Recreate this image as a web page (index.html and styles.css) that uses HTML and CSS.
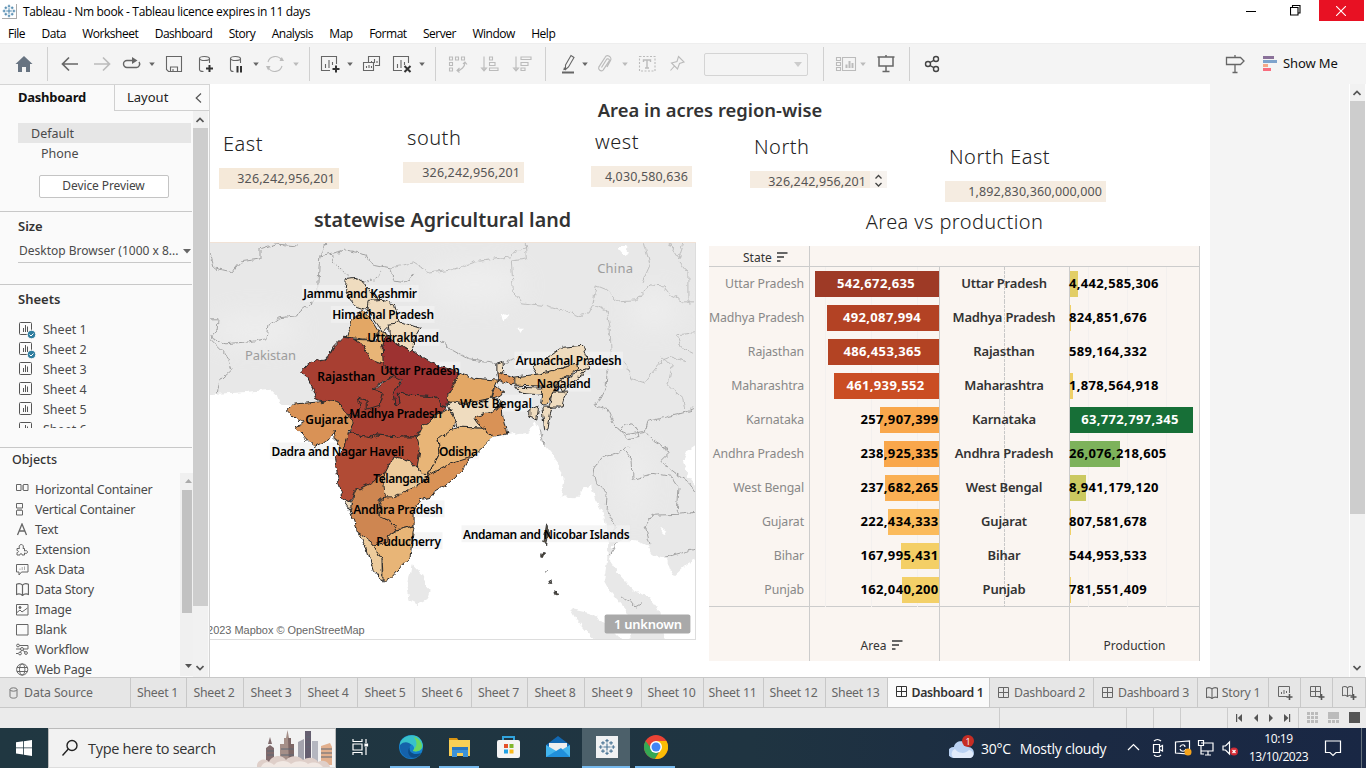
FILE: index.html
```html
<!DOCTYPE html>
<html lang="en">
<head>
<meta charset="utf-8">
<title>Tableau - Nm book</title>
<link rel="stylesheet" href="styles.css">
</head>
<body>
<svg class="defs" width="0" height="0">
  <defs>
    <symbol id="caret" viewBox="0 0 8 24"><path d="M1.2 10.5h5.6L4 14z" fill="currentColor"/></symbol>
    <symbol id="sheet" viewBox="0 0 14 14"><rect x=".5" y=".5" width="12" height="12" rx="1" fill="none" stroke="#555"/><path d="M4.5 6v4M6.5 3v7M8.500 4.500V10" stroke="#555" fill="none"/></symbol>
    <symbol id="dash" viewBox="0 0 12 12"><path d="M.5.5h10v10H.5zM5.500 .5v10M.5 5.500h10" fill="none" stroke="currentColor" stroke-width="1"/></symbol>
    <symbol id="book" viewBox="0 0 12 12"><path d="M.5 1.2C2 .5 4.500.5 6 2 7.500.5 10 .5 11.500 1.200V10.500C10 10 7.500 10 6 11.500 4.500 10 2 10 .5 10.500zM6 2v9" fill="none" stroke="currentColor" stroke-width="1.1"/></symbol>
    <symbol id="sort" viewBox="0 0 11 11"><path d="M0 1h10.500M0 5h7M0 9h3.500" stroke="#666" stroke-width="2"/></symbol>
    <symbol id="logo" viewBox="0 0 20 20"><path d="M10 6v8M6 10h8M10 1v4M8.200 3h3.600M10 15v4M8.200 17h3.600M3 8v4M1 10h4M17 8v4M15 10h4M5.500 3.500v4M3.500 5.500h4M14.500 3.500v4M12.500 5.500h4M5.500 12.500v4M3.500 14.500h4M14.500 12.500v4M12.500 14.500h4" stroke="currentColor" stroke-width="1.300" fill="none"/></symbol>
  </defs>
</svg>

<header class="titlebar">
  <svg class="app-icon"><use href="#logo"/></svg>
  <span class="app-title">Tableau - Nm book - Tableau licence expires in 11 days</span>
  <span class="win-btn"><svg width="10" height="10"><path d="M0 5.500h10" stroke="#000"/></svg></span>
  <span class="win-btn"><svg width="11" height="11" fill="none" stroke="#000" stroke-width="1.100"><path d="M.5 2.500h7.500v7.500H.5zM2.500 2.500v-2h7.500v7.500H8"/></svg></span>
  <span class="win-btn close"><svg width="10" height="10" stroke="#fff" stroke-width="1.100"><path d="M0 0l10 10M10 0L0 10"/></svg></span>
</header>
<nav class="menubar"><span>File</span><span>Data</span><span>Worksheet</span><span>Dashboard</span><span>Story</span><span>Analysis</span><span>Map</span><span>Format</span><span>Server</span><span>Window</span><span>Help</span></nav>

<div class="toolbar">
  <svg class="ic"><path d="M3.500 12L12 4l8.500 8H18v8h-4v-5h-4v5H6v-8z" fill="#677381"/></svg>
  <i class="sep"></i>
  <svg class="ic"><path d="M20 12H5M11 5.500L4.500 12l6.500 6.500" stroke-width="1.700"/></svg>
  <svg class="ic off"><path d="M4 12h15M13 5.500l6.500 6.500-6.500 6.500" stroke-width="1.700"/></svg>
  <svg class="ic"><path d="M13 8.500H8a3.500 3.500 0 0 0 0 7h9.500a3.500 3.500 0 0 0 2.500-5.500" stroke-width="1.400"/><path d="M13 5l5.500 3.500L13 12z" fill="#666" stroke="none"/></svg>
  <svg class="ct"><use href="#caret"/></svg>
  <svg class="ic"><path d="M4.500 4.500h15v15h-13l-2-2zM8.500 19v-4h7v4M11 19v-2"/></svg>
  <svg class="ic"><ellipse cx="11.500" cy="6.500" rx="5" ry="2"/><path d="M6.500 6.500v11c0 1.200 2 2 4 2M16.500 6.500V11"/><path d="M16.500 13v7M13 16.500h7" stroke="#333" stroke-width="2"/></svg>
  <svg class="ic"><ellipse cx="11.500" cy="6.500" rx="5" ry="2"/><path d="M6.500 6.500v11c0 1.200 1.500 2 3 2M16.500 6.500V11"/><path d="M13.500 14v6.500M17 14v6.500" stroke="#333" stroke-width="2"/></svg>
  <svg class="ct"><use href="#caret"/></svg>
  <svg class="ic off"><path d="M5 10a7.500 7.500 0 0 1 13.500-2M19 14A7.500 7.500 0 0 1 5.500 16"/><path d="M16.500 9h4.500l-2.200-4zM3 14h4.500l-2.300 4.500z" fill="#bbb" stroke="none"/></svg>
  <svg class="ct off"><use href="#caret"/></svg>
  <i class="sep"></i>
  <svg class="ic"><path d="M12 18.500H3.500v-14h15V12M7.500 12v4M11 8v8M14.500 10v3"/><path d="M18 13.500v7M14.500 17h7" stroke="#333" stroke-width="2"/></svg>
  <svg class="ct"><use href="#caret"/></svg>
  <svg class="ic"><path d="M9.500 10V4.500h11v9H16M4.500 10.500h10v8h-10zM12.500 9v2M15.500 7v4M18 9v2M7.500 14v2M10 13v3M12.500 14v2"/></svg>
  <svg class="ic"><path d="M12 18.500H3.500v-14h15V11M7.500 12v4M11 8v8M14.500 10v3"/><path d="M14.500 14l6 6M20.500 14l-6 6" stroke="#333" stroke-width="2"/></svg>
  <svg class="ct"><use href="#caret"/></svg>
  <i class="sep"></i>
  <svg class="ic off"><path d="M4.500 5h3v3h-3zM10.500 5h3v3h-3zM16.500 5h3v3h-3zM4.500 10.500h3v3h-3zM4.500 16h3v3h-3zM20 10.500c0 4-4 8-7.500 8M18 12l2-2 2 2.500M14.500 16l-2.500 2.500 2.500 2"/></svg>
  <svg class="ic off"><path d="M6 4.500V19M3.500 16l2.500 3 2.500-3zM11.500 5h3v3h-3zM11.500 10.500h5.500v3h-5.500zM11.500 16h8.500v2.500h-8.500z"/></svg>
  <svg class="ic off"><path d="M6 4.500V19M3.500 16l2.500 3 2.500-3zM11 5h10v2.500H11zM11 10.500h7v3h-7zM11 16h4v2.500h-4z"/></svg>
  <i class="sep"></i>
  <svg class="ic"><path d="M9.500 13l5.500-9.500 3 2-5.500 9.500-3 2.500zM8.500 15.500l-.5 2 2-.5"/><path d="M6 20.500h12" stroke-width="2"/></svg>
  <svg class="ct"><use href="#caret"/></svg>
  <svg class="ic off"><path d="M8.500 15.500l5-8a1.500 1.500 0 0 1 2.600 1.600l-6 9a2.700 2.700 0 0 1-4.300-3L12 5.500a3 3 0 0 1 5.500 3L14 15" stroke-width="1.200"/></svg>
  <svg class="ct off"><use href="#caret"/></svg>
  <svg class="ic off"><rect x="4.500" y="4.500" width="15.500" height="14.500" stroke-dasharray="2 1.500"/><path d="M8.500 10V8h7v2M12 8v8M10 16h4" stroke-width="1.400"/></svg>
  <svg class="ic off"><path d="M13.500 4.500l5.500 5.500-4.500 1.500-2 5.500-6-6 5.500-1.500zM9.500 14L5.500 18.500"/></svg>
  <div class="fit-select"><svg width="8" height="5"><path d="M0 0h8L4 5z" fill="#ccc"/></svg></div>
  <i class="sep"></i>
  <svg class="ic off wide"><path d="M2.500 5.500h4v3h-4zM2.500 10.500h4v3h-4zM2.500 15.500h4v3h-4zM8.500 5.500h13v13h-13z"/><path d="M12.500 16v-3.500M15.500 16V9M18.500 16v-5" stroke-width="2"/></svg>
  <svg class="ct off"><use href="#caret"/></svg>
  <svg class="ic"><path d="M3.500 5h17M5 5.500v8.500h14V5.500M12 3v2M12 14v5M8.500 19.500h7" stroke-width="1.500"/></svg>
  <i class="sep"></i>
  <svg class="ic dark"><circle cx="8" cy="12" r="2.500"/><circle cx="16" cy="7" r="2.500"/><circle cx="16" cy="17" r="2.500"/><path d="M10 10.500l3.800-2.200M10 13.500l3.800 2.200"/></svg>
  <svg class="ic"><path d="M3.500 5.500h14l3.500 3.500-3.500 3.500h-14zM12 3v2.500M12 12.500v8M9.500 20.500h5" stroke-width="1.300"/></svg>
  <div class="showme"><svg width="14" height="15"><path d="M0 0h11v3H0z" fill="#8a7199"/><path d="M0 4h14v3H0z" fill="#7ea3cc"/><path d="M0 8h5v3H0z" fill="#f5a887"/><path d="M0 12h8v3H0z" fill="#f96d7e"/></svg>Show Me</div>
</div>

<main class="workspace">
  <aside class="sidebar">
    <div class="side-tabs"><b>Dashboard</b><span>Layout<svg width="7" height="10"><path d="M6 .5L1.200 5 6 9.500" fill="none" stroke="#555" stroke-width="1.200"/></svg></span></div>
    <div class="side-body">
      <div class="side-main">
        <section class="devices">
          <div class="dev active">Default</div>
          <div class="dev phone">Phone</div>
          <button class="preview">Device Preview</button>
        </section>
        <section class="size"><h3>Size</h3><div class="size-pick">Desktop Browser (1000 x 8...<svg width="8" height="5"><path d="M0 0h8L4 4.500z" fill="#666"/></svg></div></section>
        <section class="sheets"><h3>Sheets</h3>
          <ul>
            <li><svg class="used"><use href="#sheet" width="14" height="14"/><circle cx="12.500" cy="12.500" r="4.300" fill="#2f7d9f" stroke="#fafafa"/><path d="M10.500 12.500l1.500 1.500 2.500-2.500" stroke="#fff" fill="none"/></svg>Sheet 1</li>
            <li><svg class="used"><use href="#sheet" width="14" height="14"/><circle cx="12.500" cy="12.500" r="4.300" fill="#2f7d9f" stroke="#fafafa"/><path d="M10.500 12.500l1.500 1.500 2.500-2.500" stroke="#fff" fill="none"/></svg>Sheet 2</li>
            <li><svg><use href="#sheet" width="14" height="14"/></svg>Sheet 3</li>
            <li><svg><use href="#sheet" width="14" height="14"/></svg>Sheet 4</li>
            <li><svg><use href="#sheet" width="14" height="14"/></svg>Sheet 5</li>
            <li><svg><use href="#sheet" width="14" height="14"/></svg>Sheet 6</li>
          </ul>
        </section>
        <section class="objects"><h3>Objects</h3>
          <div class="obj-wrap">
            <ul>
              <li><svg><path d="M.5 1.500h4.500v6H.5zM7.500 1.500H12v6H7.500z"/><path d="M5 2h2.500v5H5z" fill="#aaa" stroke="none"/></svg>Horizontal Container</li>
              <li><svg><path d="M.5.5h6v4.500h-6zM.5 7.500h6V12h-6z"/><path d="M1 5h5v2.500H1z" fill="#aaa" stroke="none"/></svg>Vertical Container</li>
              <li><svg><path d="M1.500 12L6 1l4.500 11M3 8h6" stroke-width="1.300"/></svg>Text</li>
              <li><svg><path d="M1 5.500h2.500c-1-2 0-4 1.800-4S8 3.500 7 5.500h1.500V8c2-1 3 0 3 1s-1 2-3 1v2H6c0-1.500-1-1.500-1-1.500S4 10.500 4 12H1V9.500c2 0 2-2 0-2z"/></svg>Extension</li>
              <li><svg><path d="M.5 1.500H12v7.500H5.500L3 12V9H.5z"/><path d="M4 7V5.500M6.200 7V4M8.500 7V3.500" stroke="#aaa"/></svg>Ask Data</li>
              <li><svg><use href="#book" width="13" height="13"/></svg>Data Story</li>
              <li><svg><path d="M.5 1.500h11.500V12H.5zM1 9.500l3-2.500 2 2 5.500-4"/><circle cx="4" cy="4.500" r="1" fill="#666"/></svg>Image</li>
              <li><svg><path d="M.5 1.500h11.500V12H.5z"/></svg>Blank</li>
              <li><svg><circle cx="2" cy="2.500" r="1.400"/><circle cx="6" cy="6" r="1.500"/><circle cx="4" cy="10.500" r="1.400"/><circle cx="10" cy="10" r="1.400"/><path d="M3.500 2.500H12V6H7.500M0 6h4.500M7 7.500l2 1.500M5.500 7.500L4.500 9M0 10.500h2"/></svg>Workflow</li>
              <li><svg><circle cx="6.200" cy="6.500" r="5.600"/><ellipse cx="6.200" cy="6.500" rx="2.700" ry="5.600"/><path d="M1 4.500h10.500M1 8.500h10.500"/></svg>Web Page</li>
            </ul>
            <div class="mini-bar"><svg width="8" height="4"><path d="M0 4h7L3.500 0z" fill="#aaa"/></svg><i></i><svg width="8" height="4"><path d="M0 0h7L3.500 4z" fill="#555"/></svg></div>
          </div>
        </section>
      </div>
      <div class="vbar side"><svg width="8" height="6"><path d="M.5 5L4 1.500 7.500 5" /></svg><i></i><svg width="8" height="6"><path d="M.5 1L4 4.500 7.500 1"/></svg></div>
    </div>
  </aside>

  <div class="canvas">
    <h1>Area in acres region-wise</h1>
    <div class="kpis">
      <div class="kpi east"><h2>East</h2><p>326,242,956,201</p></div>
      <div class="kpi south"><h2>south</h2><p>326,242,956,201</p></div>
      <div class="kpi west"><h2>west</h2><p>4,030,580,636</p></div>
      <div class="kpi north"><h2>North</h2><div class="spin-row"><p>326,242,956,201</p><svg width="17" height="17"><rect width="17" height="17" fill="#f7f3ef"/><path d="M5.500 7.500l3-3 3 3M5.500 12l3 3 3-3" fill="none" stroke="#444" stroke-width="1.300"/></svg></div></div>
      <div class="kpi neast"><h2>North East</h2><p>1,892,830,360,000,000</p></div>
    </div>
    <div class="views">
      <section class="mapview">
        <h2>statewise Agricultural land</h2>
        <svg class="map" viewBox="210 243 486 397">
          <defs>
            <filter id="coast" x="-5%" y="-5%" width="110%" height="110%" color-interpolation-filters="sRGB"><feTurbulence type="fractalNoise" baseFrequency=".16" numOctaves="2" seed="4"/><feDisplacementMap in="SourceGraphic" scale="6" xChannelSelector="R" yChannelSelector="G"/></filter>
            <filter id="soft"><feGaussianBlur stdDeviation="14"/></filter>
          </defs>
          <rect x="210" y="243" width="486" height="397" fill="#fff"/>
          <g filter="url(#coast)">
            <path fill="#e8e8e8" d="M200 233H706V440L688 452 684 462 690 477 706 496V555L690 563 675 577 671 570 668 560 655 557 648 546 637 541 625 540 613 546 611 562 620 575 634 591 650 598 660 612 668 650H633L628 612 612 593 605 580 608 562 609 545 605 515 596 500 592 486 586 488 576 499 562 498 565 482 556 458 546 446 541 431 535 422 529 432 505 436 470 440 400 440 330 420 300 408 280 404 277 396 271 390 240 393 200 395Z"/>
            <path fill="#e8e8e8" d="M571 610L590 614 607 625 622 640 632 650H606L590 635 576 619ZM412 565L422 575 430 592 427 601 418 606 410 602 408 588Z"/>
            <path fill="#fff" d="M618 247h8l4 5-5 3zM502 313l7 3-4 5zM518 328h8l-6 4zM661 528l7 5-3 2z"/>
          </g>
          <g fill="#fff" opacity=".28" filter="url(#soft)"><ellipse cx="255" cy="330" rx="45" ry="16"/><ellipse cx="475" cy="285" rx="50" ry="20"/><ellipse cx="655" cy="310" rx="26" ry="18"/><ellipse cx="635" cy="480" rx="12" ry="40"/></g>
          <g filter="url(#coast)" fill="none" stroke="#a2a2a2" stroke-width="1">
            <path d="M210 253L214 268 232 272 240 262 260 259 260 249 275 244 298 246M326 243L320 256 318 285 318 298 300 312 298 316 279 318 268 326 266 339 250 342 225 344 213 339 210 334M210 339L225 354 231 370 220 380 217 394M210 319h8l-1 12-7 8M320 256L346 250 366 254 372 264 391 268M391 268l3 13 12 2 8-10"/>
            <path stroke="#b4b4b4" stroke-width=".8" d="M391 268L414 263 430 273 452 270 475 262 510 257 528 246"/>
            <path stroke-dasharray="2 1.500" d="M333 255l1 10 13 9 8 8 20-2 8-10"/>
            <path stroke="#b4b4b4" stroke-width=".8" d="M512 261l2 30 8 12 26 3 22 6 10 4 10-3 4-8 14 6 3 17 1 25-4 20M594 303l3-17 10 4 12 12 18-1 13-16 15 1 8 10 11 6h10M512 261l16-2-1-16M643 283l8-18-6-22M670 243l10 15 5-15M681 262l8 10v33M696 333l-18 2 4 12 12 6M625 362l8 17 12 4 18-22 10-4 14 5M663 357l10 10-4 18 15 14 2 14 10-6"/>
            <path d="M441 341L452 350 470 360 497 364M504 365l10-6 10-4M608 370l-1 18-11 18 12 4 8 17 12 8 17-3 3-10 30-7 18-5"/>
            <path d="M630 440l-10-10 8-6 10 4 2 10zM630 447l-15 8-12 3-9 12 2 12 12 12-1 15 8 16 0 9M618 543l-9 14M625 450l8 10 1 20 20-6 18 3 8 12-2 26-25 1-7 10 5 19M646 432l9 10 17 10-10 10 15 12 12 8 7 10M679 515l17-2M667 558l10-3 19-5M622 598l8 3 6 7 7-4"/>
            <path d="M541 430l4 17"/>
          </g>
          <g class="halo"><rect x="302" y="285" width="117" height="17"/><rect x="331" y="306" width="104" height="17"/><rect x="366" y="329" width="74" height="17"/><rect x="379" y="362" width="82" height="17"/><rect x="515" y="352" width="109" height="17"/><rect x="536" y="375" width="56" height="17"/><rect x="460" y="395" width="73" height="17"/><rect x="270" y="443" width="136" height="17"/><rect x="437" y="443" width="43" height="17"/><rect x="352" y="501" width="93" height="17"/><rect x="375" y="533" width="68" height="17"/><rect x="462" y="526" width="169" height="17"/></g>
          <g filter="url(#coast)" stroke="#292929" stroke-width="1" stroke-linejoin="round" transform="translate(.5 .5)">
            <path fill="#efdcbf" d="M346 278L355 277 364 282 369 290 378 299 368 305 362 309 356 307 352 302 347 295 345 287Z"/>
            <path fill="#efdcbf" d="M368 300L383 299 393 303 398 323 388 327 383 332 373 318 367 308Z"/>
            <path fill="#efdcbf" d="M388 324L402 322 420 328 414 338 412 352 400 345 390 340Z"/>
            <path fill="#e3a765" d="M347 337L352 320 363 309 370 318 378 331 373 340 357 338Z"/>
            <path fill="#e8b577" d="M353 339L377 340 378 330 386 333 382 347 385 363 377 362 369 358 363 345Z"/>
            <path fill="#a83f32" d="M352 423L340 405 373 390 393 375 402 378 393 393 395 405 400 403 398 393 410 395 427 396 438 398 440 405 447 408 432 418 422 427 417 437 397 437 377 435 370 438 350 433Z"/>
            <path fill="#a83f32" d="M343 337L353 338 363 345 370 358 383 363 393 375 377 385 373 390 383 393 380 405 367 409 367 400 357 398 360 408 357 415 347 413 338 403 317 400 312 387 307 377 301 372 310 362 327 358 333 347Z"/>
            <path fill="#9d3231" d="M385 335L392 340 413 352 430 362 458 373 457 383 448 393 447 407 440 405 438 398 427 396 410 395 398 393 400 403 395 405 393 393 402 380 392 375 383 363 382 347Z"/>
            <path fill="#d99256" d="M287 411L293 404 317 402 327 400 338 403 347 413 353 423 348 433 348 443 342 451 335 440 334 430 328 440 315 446 307 440 295 427 305 423 297 420Z"/>
            <path fill="#b14b35" d="M334 457L345 447 348 434 352 433 370 438 377 435 397 437 417 437 420 450 417 467 410 462 393 457 388 468 383 477 373 482 353 492 350 502 343 500 338 480Z"/>
            <path fill="#efdcbf" d="M343 500L351 502 351 511Z"/>
            <path fill="#ce8651" d="M353 492L373 482 384 472 387 497 380 500 380 517 392 522 397 530 387 537 387 543 373 545 357 532 350 511Z"/>
            <path fill="#edcb9c" d="M357 532L373 545 382 560 382 582 373 570 367 550Z"/>
            <path fill="#e8b577" d="M387 537L397 530 414 526 412 540 410 558 400 568 392 577 383 583 382 560 373 545 387 543Z"/>
            <path fill="#d99256" d="M381 498L403 493 423 483 428 475 447 465 471 456 460 473 450 483 435 492 432 497 420 500 414 510 414 526 397 530 392 522 380 517Z"/>
            <path fill="#edcb9c" d="M393 457L410 462 417 468 427 477 423 483 392 498 385 498 383 477Z"/>
            <path fill="#e8b577" d="M432 418L450 408 455 422 450 433 438 440 440 453 432 467 427 477 417 467 420 450 417 437 422 427Z"/>
            <path fill="#e8b577" d="M438 440L450 430 460 427 483 428 493 436 483 447 472 457 447 465 428 475 440 453Z"/>
            <path fill="#efdcbf" d="M447 403L467 403 492 398 502 400 497 410 477 417 482 428 457 427 453 413Z"/>
            <path fill="#e3a765" d="M447 397L457 377 460 373 473 378 498 380 493 392 492 398 467 403 448 403Z"/>
            <path fill="#d99256" d="M474 417L497 410 502 403 503 417 507 434 493 436 482 428ZM497 372L515 377 513 385 498 380ZM496 386L505 393 492 398Z"/>
            <path fill="#efdcbf" d="M497 363L503 361 504 373 497 372ZM533 367L563 347 583 345 587 357 590 368 577 372 577 363 563 368 538 375Z"/>
            <path fill="#e8bd84" d="M515 377L538 374 563 368 577 363 578 369 558 382 553 395 545 406 541 403 543 386 515 385Z"/>
            <path fill="#efdcbf" d="M515 387L543 388 542 395 520 393ZM558 382L577 372 590 368 567 387 563 392ZM553 392L567 392 563 407 549 407ZM542 407L552 407 548 430 545 430ZM530 410L539 406 537 420 530 417Z"/>
            <path fill="#5c5548" stroke-width=".8" d="M547 524l2 8-2 14-3-4zM542 554h1.500v3.500h-1.500zM545 571h.5v.5h-.5zM550 581l3 2-2 1zM555 591l3 4-2 1z"/>
          </g>
          <g class="country"><text x="245" y="360" textLength="51">Pakistan</text><text x="598" y="273" textLength="36">China</text></g>
          <g class="state" transform="translate(.5 .6)">
            <text x="303" y="298" textLength="114">Jammu and Kashmir</text><text x="332" y="319" textLength="102">Himachal Pradesh</text><text x="367" y="342" textLength="72">Uttarakhand</text>
            <text x="380" y="375" textLength="80">Uttar Pradesh</text><text x="317" y="381" textLength="58">Rajasthan</text><text x="516" y="365" textLength="106">Arunachal Pradesh</text>
            <text x="537" y="388" textLength="54">Nagaland</text><text x="460" y="408" textLength="72">West Bengal</text><text x="349" y="418" textLength="93">Madhya Pradesh</text>
            <text x="305" y="424" textLength="43">Gujarat</text><text x="271" y="456" textLength="133">Dadra and Nagar Haveli</text><text x="439" y="456" textLength="39">Odisha</text>
            <text x="373" y="483" textLength="57">Telangana</text><text x="353" y="514" textLength="90">Andhra Pradesh</text><text x="376" y="546" textLength="65">Puducherry</text><text x="463" y="539" textLength="167">Andaman and Nicobar Islands</text>
          </g>
          <rect x="210" y="622" width="157" height="16" fill="#fff" opacity=".7"/>
          <text class="credit" x="207" y="635" textLength="158">2023 Mapbox © OpenStreetMap</text>
          <rect x="605.500" y="615.500" width="86" height="19" rx="2" fill="#a9a9a9"/>
          <text class="unknown" x="615" y="630" textLength="68">1 unknown</text>
        </svg>
      </section>

      <section class="chart">
        <h2>Area vs production</h2>
        <div class="grid">
          <div class="hdr"><span>State <svg width="11" height="11"><use href="#sort"/></svg></span><span></span></div>
          <div class="row"><span>Uttar Pradesh</span><div class="area"><i style="width:124px;background:#9e3a26"></i><b class="in" style="width:124px">542,672,635</b></div><strong>Uttar Pradesh</strong><div class="prod"><i style="width:8px;background:#e2ce66"></i><b>4,442,585,306</b></div></div>
          <div class="row"><span>Madhya Pradesh</span><div class="area"><i style="width:112px;background:#b34224"></i><b class="in" style="width:112px">492,087,994</b></div><strong>Madhya Pradesh</strong><div class="prod"><i style="width:1px;background:#f1d167"></i><b>824,851,676</b></div></div>
          <div class="row"><span>Rajasthan</span><div class="area"><i style="width:111px;background:#b34323"></i><b class="in" style="width:111px">486,453,365</b></div><strong>Rajasthan</strong><div class="prod"><i style="width:0px;background:#f1d167"></i><b>589,164,332</b></div></div>
          <div class="row"><span>Maharashtra</span><div class="area"><i style="width:105px;background:#ca4d23"></i><b class="in" style="width:105px">461,939,552</b></div><strong>Maharashtra</strong><div class="prod"><i style="width:3px;background:#efd066"></i><b>1,878,564,918</b></div></div>
          <div class="row"><span>Karnataka</span><div class="area"><i style="width:59px;background:#f9a74b"></i><b>257,907,399</b></div><strong>Karnataka</strong><div class="prod"><i style="width:123px;background:#176f37"></i><b class="in" style="width:120px">63,772,797,345</b></div></div>
          <div class="row"><span>Andhra Pradesh</span><div class="area"><i style="width:55px;background:#f9a74b"></i><b>238,925,335</b></div><strong>Andhra Pradesh</strong><div class="prod"><i style="width:50px;background:#7db25b"></i><b>26,076,218,605</b></div></div>
          <div class="row"><span>West Bengal</span><div class="area"><i style="width:54px;background:#fab054"></i><b>237,682,265</b></div><strong>West Bengal</strong><div class="prod"><i style="width:16px;background:#cbc961"></i><b>8,941,179,120</b></div></div>
          <div class="row"><span>Gujarat</span><div class="area"><i style="width:51px;background:#fbbb5c"></i><b>222,434,333</b></div><strong>Gujarat</strong><div class="prod"><i style="width:1px;background:#f1d167"></i><b>807,581,678</b></div></div>
          <div class="row"><span>Bihar</span><div class="area"><i style="width:38px;background:#f4cf66"></i><b>167,995,431</b></div><strong>Bihar</strong><div class="prod"><i style="width:0px;background:#f1d167"></i><b>544,953,533</b></div></div>
          <div class="row"><span>Punjab</span><div class="area"><i style="width:37px;background:#f3d068"></i><b>162,040,200</b></div><strong>Punjab</strong><div class="prod"><i style="width:1px;background:#f1d167"></i><b>781,551,409</b></div></div>
          <div class="foot"><span></span><span>Area <svg width="11" height="11"><use href="#sort"/></svg></span><span></span><span>Production</span></div>
        </div>
      </section>
    </div>
  </div>
  <div class="gutter"></div>
  <div class="vbar page"><svg width="8" height="6"><path d="M.5 5L4 1.500 7.500 5"/></svg><i></i><svg width="8" height="6"><path d="M.5 1L4 4.500 7.500 1"/></svg></div>
</main>

<nav class="tabs">
  <span class="src"><svg width="9" height="12" fill="none" stroke="#777"><ellipse cx="4.500" cy="2.500" rx="3.500" ry="1.700"/><path d="M1 2.500v7c0 2.200 7 2.200 7 0v-7"/></svg>Data Source</span><span>Sheet 1</span><span>Sheet 2</span><span>Sheet 3</span><span>Sheet 4</span><span>Sheet 5</span><span>Sheet 6</span><span>Sheet 7</span><span>Sheet 8</span><span>Sheet 9</span><span>Sheet 10</span><span>Sheet 11</span><span>Sheet 12</span><span>Sheet 13</span>
  <span class="on"><svg width="12" height="12"><use href="#dash" width="12" height="12"/></svg>Dashboard 1</span><span class="db"><svg width="12" height="12"><use href="#dash" width="12" height="12"/></svg>Dashboard 2</span><span class="db"><svg width="12" height="12"><use href="#dash" width="12" height="12"/></svg>Dashboard 3</span><span class="db"><svg width="12" height="12"><use href="#book" width="12" height="12"/></svg>Story 1</span>
  <span class="new"><svg width="16" height="16"><path d="M10 11.500H1.500v-10h11V8M4.500 7v2M7 5v4M9.500 6v2" stroke="#666" fill="none"/><path d="M12.500 9v6M9.500 12h6" stroke="#555" stroke-width="1.600"/></svg></span>
  <span class="new"><svg width="16" height="16"><use href="#dash" x="1" y="1" width="12" height="12"/><path d="M12.500 9v6M9.500 12h6" stroke="#555" stroke-width="1.600"/></svg></span>
  <span class="new"><svg width="16" height="16"><use href="#book" x="1" y="1" width="11" height="11"/><path d="M12.500 9v6M9.500 12h6" stroke="#555" stroke-width="1.600"/></svg></span>
</nav>
<div class="status">
  <i></i><i></i><i></i><i></i><i></i>
  <span class="pager"><svg width="60" height="10" fill="#555"><path d="M3 1h1.200v8H3zM9 1v8L4.800 5zM25 1v8l-4-4zM36 1v8l4-4zM51 1v8l4.500-4zM56 1h1.200v8H56z"/></svg></span>
  <span class="modes"><svg width="56" height="12" fill="#bbb"><path d="M0 0h3v3H0zM4 0h3v3H4zM8 0h3v3H8zM0 4h3v3H0zM4 4h3v3H4zM8 4h3v3H8zM0 8h3v3H0zM4 8h3v3H4zM8 8h3v3H8zM21 0h11v7H21zM21 8h3v3h-3zM25 8h3v3h-3zM29 8h3v3h-3z"/><path d="M42 0h11v11H42z" fill="#555"/></svg></span>
</div>

<footer class="taskbar">
  <div class="start"><svg width="16" height="16" fill="#fff"><path d="M0 2.300L7 1.300V7.500H0zM7.800 1.200L16 0v7.500H7.800zM0 8.300h7v6.300L0 13.600zM7.800 8.300H16V16l-8.200-1.200z"/></svg></div>
  <div class="search">
    <svg width="18" height="18" fill="none" stroke="#222" stroke-width="1.400"><circle cx="11" cy="6.500" r="5"/><path d="M7.300 10L1.500 16.500"/></svg><span>Type here to search</span>
    <svg class="city" width="78" height="38"><path d="M9 19l4-3 4 3v18H9zM11 15l2-7 2 7z" fill="#806b6d"/><path d="M23 15h4v-6h2l1.500-8 1.500 8h2v6h3v22H23z" fill="#a58f88"/><path d="M31 9h3v6h3v22h-5z" fill="#7d6766"/><path d="M41 13l6-3v27h-6z" fill="#a3a3ad"/><path d="M48 2h6v35h-6z" fill="#655f70"/><path d="M55 12h6v24h-6z" fill="#b5b7c0"/><path d="M64 17l9-3 2 4v18H64z" fill="#e2b08e"/><path d="M64 20h11M64 24h11M64 28h11M10 22h7M10 26h7M24 20h13M24 26h13M49 8h4M49 13h4M49 18h4" stroke="#5e6874"/><path d="M0 38c-1-7 8-10 12-5 3-7 13-8 17-2 5-6 14-4 17 0 6-4 13-2 15 2 5-3 11 0 12 5z" fill="#dfcfc9"/><path d="M4 38c2-6 9-6 13-2 4-5 13-5 17-1 6-4 14-3 17 0 6-3 12-1 15 3z" fill="#f1e8e3"/></svg>
  </div>
  <div class="app"><svg width="18" height="18" fill="none" stroke="#fff" stroke-width="1.200"><path d="M2 1v2.500h9V1M2 17v-2.500h9V17M2 6h9v6H2zM15 1v4M15 9v8"/><path d="M14 6h2.500v2H14z" fill="#fff"/></svg></div>
  <div class="app run"><svg viewBox="0 0 24 24"><circle cx="12" cy="12" r="12" fill="#1581cc"/><path d="M1 8C4 0 17-3 22 5c5 8-1 13-8 11 3-4-1-8-6-7-4 0-6 2-7 3z" fill="#38c1ca"/><path d="M15 2c8 2 11 12 4 14-2 .7-5 .5-5-.5 5-5 4-9 1-13.500z" fill="#6bd75f"/><path d="M1 10c4-4 9-3 11 0-4 4-2 10 5 11-8 6-17-1-16-11z" fill="#1562aa"/><path d="M11 12c-2 5 4 9 11 6-2 4-7 6-10 4-3-2-4-7-1-10z" fill="#0d4d88"/></svg></div>
  <div class="app run"><svg viewBox="0 0 24 24"><path d="M1 3h8l2 3H1z" fill="#d99512"/><path d="M1 5h21v16H1z" fill="#f9cf55"/><path d="M4 12h16v10h-5v-4H9v4H4z" fill="#3b92d8"/><path d="M4 12h16v3H4z" fill="#2a75be"/></svg></div>
  <div class="app"><svg viewBox="0 0 24 24"><path d="M6 6V2h11v4" fill="none" stroke="#31a4dd" stroke-width="2"/><rect x="0" y="5" width="23" height="18" rx="2" fill="#f4f4f4"/><path d="M7 9h4v4H7z" fill="#e4502a"/><path d="M12.500 9h4v4h-4z" fill="#80b62c"/><path d="M7 14.500h4v4H7z" fill="#20a0e4"/><path d="M12.500 14.500h4v4h-4z" fill="#f9b91c"/></svg></div>
  <div class="app"><svg viewBox="0 0 24 24"><path d="M0 10L12 1l12 9v12H0z" fill="#1268b2"/><path d="M3 8h18v9H3z" fill="#eee"/><path d="M0 10l12 7L24 10v12H0z" fill="#43b5ee"/><path d="M0 22l15-9 9 9z" fill="#208fdb"/></svg></div>
  <div class="app run active"><svg viewBox="0 0 24 24"><path d="M1 1h22v22H1z" fill="#f1f2f3"/><use href="#logo" x="3" y="3" width="18" height="18" color="#507999"/></svg></div>
  <div class="app run"><svg viewBox="0 0 24 24"><circle cx="12" cy="12" r="12" fill="#ea4335"/><path d="M1.600 6A12 12 0 0 0 11 24l5-9-9-2z" fill="#34a853"/><path d="M12 6h10.400A12 12 0 0 1 11 24l5.500-9z" fill="#fbbc05"/><circle cx="12" cy="12" r="6" fill="#fff"/><circle cx="12" cy="12" r="4.500" fill="#4285f4"/></svg></div>
  <div class="tray">
    <svg class="cloud" width="28" height="28"><path d="M4 25a5.500 5.500 0 0 1 1-11c1-7 12-8 14 0 7 0 8 10 2 11z" fill="#b9d1f2"/><path d="M5 25a5 5 0 0 1 1-9 9 9 0 0 0 14 1c5 1 6 7 1 8z" fill="#e1ebfa"/><circle cx="19" cy="8" r="6" fill="#c62d24"/><text x="19" y="11.500" text-anchor="middle" fill="#fff" font-size="9">1</text></svg>
    <span class="temp"><span>30°C</span><span>Mostly cloudy</span></span>
    <svg class="sys" width="114" height="20" fill="none" stroke="#fff" stroke-width="1.200"><path d="M2 12l5.500-5.500L13 12M28 3c2-2 5-2 7 0M28 17c2 2 5 2 7 0M27.500 6.500h6v8h-6zM33.500 9l3-1.500v5.500l-3-1.500M49.500 4l14-1v13l-14-1zM54 9c1-3 5-3 5 0M54 11c1 3 5 3 6 0M75 5h12v8H75M79 17h6M82 13v4M72.500 2.500h5v5h-5zM75 8v8h3M97 8h2.500l4-4v12l-4-4H97z"/><circle cx="62" cy="14" r="3.500" fill="#f7a51c" stroke="none"/><circle cx="108" cy="13.500" r="4" fill="#d22b35" stroke="none"/><path d="M106.500 12l3 3M109.500 12l-3 3"/></svg>
    <div class="clock">10:19<br>13/10/2023</div>
    <svg class="note" width="18" height="18" fill="none" stroke="#fff" stroke-width="1.200"><path d="M1.500 2h15v11.500H12L9 16.500l-3-3H1.500z"/></svg>
    <i></i>
  </div>
</footer>
</body>
</html>
```
FILE: styles.css
```css
* { box-sizing: border-box; }
body { margin: 0; width: 1366px; height: 768px; overflow: hidden; display: flex; flex-direction: column; font-family: "Noto Sans", "Open Sans", sans-serif; font-size: 12px; color: #333; background: #fff; }
h1, h2, h3, p, ul { margin: 0; padding: 0; }
li { list-style: none; }
svg { flex: none; display: block; }
.defs { position: absolute; }

.titlebar { height: 22px; display: flex; align-items: center; color: #000; }
.app-icon { width: 15px; height: 15px; margin: 0 6px 0 2px; color: #3b7ba5; border-right: 1px solid #aaa; border-bottom: 1px solid #aaa; }
.app-title { flex: 1; font-family: "Open Sans", sans-serif; font-size: 12px; letter-spacing: -0.33px; padding-top: 1px; }
.win-btn { width: 45px; height: 21px; align-self: flex-start; display: flex; align-items: center; justify-content: center; padding-right: 2px; }
.win-btn.close { background: #e81123; margin-right: 2px; }
.menubar { height: 21px; display: flex; gap: 16.4px; padding-left: 8px; font-family: "Open Sans", sans-serif; font-size: 12px; line-height: 23px; color: #000; letter-spacing: -0.48px; }

.toolbar { height: 41px; flex: none; background: #f4f4f4; border-top: 1px solid #eee; padding-left: 12px; display: grid; align-items: center; grid-template-columns: 35px 11px 32px 29px 29px 14px 31px 31px 28px 11px 29px 17px 9px 28px 13px 31px 28px 17px 10px 33px 32px 35px 11px 25px 12px 28px 14px 30px 39px 119px 11px 25px 15px 35px 11px 303px 40px 1fr; }
.ic { width: 24px; height: 24px; fill: none; stroke: #666; stroke-width: 1.1; }
.ic:first-child { stroke: none; }
.ic.off { stroke: #bbb; }
.ic.dark { stroke: #444; stroke-width: 1.4; }
.ct { width: 8px; height: 24px; color: #666; }
.ct.off { color: #bbb; }
.sep { width: 1px; height: 34px; background: #d0d0d0; }
.fit-select { width: 104px; height: 23px; border: 1px solid #d4d4d4; border-radius: 2px; display: flex; align-items: center; justify-content: flex-end; padding-right: 5px; }
.showme { display: flex; align-items: center; gap: 6px; font-size: 13px; color: #111; line-height: 16px; padding-bottom: 2px; letter-spacing: -.1px; }

.workspace { height: 593px; flex: none; display: flex; }
.sidebar { width: 210px; flex: none; background: #fafafa; border-right: 1px solid #d4d4d4; border-top: 1px solid #d4d4d4; display: flex; flex-direction: column; color: #4a4a4a; }
.side-tabs { display: flex; height: 26px; flex: none; font-size: 13px; line-height: 25px; color: #222; }
.side-tabs b { width: 114px; padding-left: 18px; color: #111; letter-spacing: -.25px; }
.side-tabs span { flex: 1; border-left: 1px solid #d0d0d0; border-bottom: 1px solid #d0d0d0; padding: 0 7px 0 12px; display: flex; align-items: center; justify-content: space-between; letter-spacing: 0; }
.side-body { flex: 1; display: flex; min-height: 0; }
.side-main { width: 193px; display: flex; flex-direction: column; }
.side-main section { border-bottom: 1px solid #c8c8c8; width: 192px; flex: none; }
.side-main h3 { font-size: 13px; line-height: 18px; color: #333; font-weight: 600; }
.devices { height: 101px; padding: 12px 1px 0 18px; font-size: 12.5px; }
.dev { height: 20px; line-height: 21px; padding-left: 13px; }
.dev.active { background: #e6e6e6; }
.dev.phone { padding-left: 23px; }
.preview { display: block; margin: 12px 0 0 21px; width: 130px; height: 23px; padding: 0 1px 2px 0; border: 1px solid #c4c4c4; border-radius: 2px; background: #fff; font: 12px "Noto Sans", sans-serif; letter-spacing: -.1px; color: #444; }
.size { height: 73px; padding: 5px 1px 0 18px; }
.size-pick { height: 17px; margin-top: 11px; line-height: 9px; padding: 0 0 0 1px; border-bottom: 1px solid #c8c8c8; display: flex; justify-content: space-between; white-space: nowrap; align-items: flex-start; }
.size-pick svg { margin-top: 3px; }
.sheets { height: 163px; padding: 5px 0 0 18px; }
.sheets ul { margin-top: 11px; height: 109px; overflow: hidden; }
.sheets li, .objects li { height: 20px; display: flex; align-items: center; font-size: 12.5px; }
.sheets li svg { width: 18px; height: 18px; margin: 3px 6px 0 1px; }
.side-main .objects { border: 0; width: 193px; flex: 1; min-height: 0; padding-left: 12px; display: flex; flex-direction: column; }
.objects h3 { margin-top: 3px; font-size: 12.5px; font-weight: 500; }
.obj-wrap { flex: 1; display: flex; justify-content: space-between; margin-top: 4px; min-height: 0; overflow: hidden; }
.obj-wrap ul { padding-top: 7px; letter-spacing: -.24px; line-height: 16px; }
.objects li svg { width: 14px; height: 14px; margin: 0 5px 0 4px; fill: none; stroke: #666; stroke-width: 1; color: #666; }
.mini-bar { width: 13px; background: #f0f0f0; display: flex; flex-direction: column; padding: 6px 1px 8px 2px; height: 203px; }
.mini-bar svg { margin-left: 3px; }
.mini-bar i { height: 123px; background: #c2c2c2; margin: 7px 0 auto; }
.vbar { width: 15px; background: #f1f1f1; display: flex; flex-direction: column; align-items: center; padding: 6px 0; }
.vbar i { width: 15px; background: #cdcdcd; margin: 5px 0 auto; }
.vbar path { fill: none; stroke: #555; stroke-width: 1.7; }
.side i { height: 478px; }
.page { margin-left: 1px; }
.page i { height: 413px; }
.vbar svg { margin-right: 1px; }
.gutter { width: 139px; background: #f4f4f4; }

.canvas { width: 1000px; flex: none; background: #fff; }
.canvas h1 { height: 41px; padding-top: 11px; line-height: 30px; text-align: center; font-size: 18.4px; font-weight: 600; }
.kpis { height: 80px; display: flex; padding-left: 9px; }
.kpi h2 { font-size: 20px; font-weight: 300; line-height: 23px; height: 36px; padding-left: 4px; color: #222; letter-spacing: .5px; }
.kpi p { height: 21px; line-height: 21px; background: #f5ece1; text-align: right; padding-right: 4px; font-size: 12.5px; letter-spacing: .12px; color: #555; }
.east { width: 184px; padding-top: 7px; } .east p { width: 120px; background: #f5e9d9; }
.south { width: 188px; padding-top: 1px; } .south p { width: 121px; }
.west { width: 159px; padding-top: 5px; } .west p { width: 101px; }
.north { width: 195px; padding-top: 10px; } .north p { width: 120px; height: 17px; }
.spin-row { display: flex; }
.neast { padding-top: 20px; } .neast p { width: 161px; }
.views { display: flex; gap: 13px; }
.mapview { width: 486px; border-right: 0; }
.mapview h2 { height: 38px; line-height: 30px; text-align: center; font-size: 19.7px; font-weight: 600; padding-right: 21px; border-bottom: 1px solid #f1e2d6; }
.map { width: 486px; height: 397px; border: solid #ddd; border-width: 0 1px 1px 0; }
.halo rect { fill: #f2f2f2; opacity: .75; }
.country text { font-size: 13px; fill: #9d9d9d; }
.state text { font-size: 12px; font-weight: 600; fill: #000; }
.credit { font: 11px "Liberation Sans", sans-serif; fill: #666; }
.unknown { font-size: 13px; font-weight: 600; fill: #fff; }

.chart { width: 491px; }
.chart h2 { height: 41px; line-height: 33px; text-align: center; font-size: 20px; font-weight: 300; letter-spacing: .4px; color: #222; }
.grid { height: 415px; background: #faf5f1; border-right: 1px solid #ccc; }
.hdr { height: 21px; display: grid; grid-template-columns: 101px 1fr; border-bottom: 1px solid #ccc; line-height: 20px; color: #333; }
.hdr span { display: flex; gap: 5px; align-items: center; padding-left: 34px; border-right: 1px solid #ccc; padding-top: 2px; }
.hdr svg { margin-top: -1px; }
.hdr span:last-child { border: 0; }
.row, .foot { display: grid; grid-template-columns: 101px 130px 130px 129px; }
.row { height: 34px; line-height: 33px; }
.row > *, .foot > * { border-right: 1px solid #ccc; }
.row > :last-child, .foot > :last-child { border-right: 0; }
.row > span { text-align: right; padding-right: 5px; color: #888; white-space: nowrap; font-size: 12.3px; letter-spacing: -.1px; }
.row strong { text-align: center; font-size: 13px; font-weight: 600; color: #333; white-space: nowrap; letter-spacing: -.2px; padding-right: 1px; background: repeating-linear-gradient(#c8c8c8 0 3px, transparent 3px 4px) 64px 0 / 1px 100% no-repeat; }
.area, .prod { display: grid; align-items: center; }
.area { justify-items: end; background: repeating-linear-gradient(90deg, transparent 0 15px, #f3f0ee 15px 16px, transparent 16px 46px); }
.prod { justify-items: start; background: repeating-linear-gradient(90deg, transparent 0 18px, #f3f0ee 18px 19px, transparent 19px 39px); }
.area > *, .prod > * { grid-area: 1 / 1; }
.area i, .prod i { height: 26px; }
.area b, .prod b { font-size: 13px; font-weight: 700; color: #000; white-space: nowrap; letter-spacing: .33px; line-height: 30px; padding-bottom: 2px; }
.area b { margin-right: .5px; }
.prod b { margin-left: -1px; }
.area b.in, .prod b.in { color: #fff; text-align: center; margin: 0; }
.area b.in { padding-right: 2px; }
.foot { border-top: 1px solid #ccc; margin-top: -1px; height: 55px; }
.foot span { display: flex; gap: 6px; align-items: center; justify-content: center; padding-top: 22px; }
.foot span:nth-child(2) { padding-left: 15px; }

.tabs { height: 31px; flex: none; display: grid; grid-template-columns: 131px 56px 57px 57px 57px 57px 57px 56px 57px 57px 62px 60px 62px 62px 102px 104px 104px 71px 32px 32px 33px; background: #e6e6e6; border-top: 1px solid #c8c8c8; border-bottom: 1px solid #c8c8c8; color: #666; }
.tabs span { border-right: 1px solid #c8c8c8; display: flex; gap: 4px; align-items: center; justify-content: center; white-space: nowrap; font-size: 12.3px; letter-spacing: -.25px; padding-right: 2px; }
.tabs .src { justify-content: flex-start; padding-left: 9px; gap: 6px; letter-spacing: -.1px; }
.tabs .on { background: #fafafa; color: #333; font-weight: 600; letter-spacing: -.35px; padding: 0 0 1px 2px; }
.tabs .db, .tabs .new { padding-right: 0; }
.status { height: 20px; flex: none; background: #ebebeb; display: grid; grid-template-columns: 1000px 127px 27px 27px 47px 71px 1fr; }
.status i, .pager { border-right: 1px solid #ccc; }
.pager, .modes { display: flex; align-items: center; padding-left: 5px; }
.modes { padding-left: 8px; }

.taskbar { height: 40px; flex: none; display: flex; background: linear-gradient(90deg, #203741, #1f3441 55%, #1b2a43 80%, #192744); color: #fff; }
.start { width: 48px; display: flex; align-items: center; justify-content: center; }
.search { width: 288px; background: #f2f2f2; display: flex; align-items: center; padding-left: 12px; color: #333; font: 14.5px "Open Sans", sans-serif; border: 1px solid #bbb; border-bottom-color: #ddd; }
.search span { flex: 1; padding-left: 9px; letter-spacing: -.3px; }
.city { align-self: flex-end; }
.app { width: 49px; display: flex; align-items: center; justify-content: center; border-bottom: 2px solid transparent; }
.app:first-of-type { width: 50px; }
.app svg { width: 24px; height: 24px; margin-left: 2px; }
.search + .app svg { width: 18px; height: 18px; margin-left: -2px; }
.run { background: linear-gradient(#76b9ed, #76b9ed) 5px bottom / 40px 2px no-repeat; border: 0; padding-bottom: 2px; }
.run.active { background: linear-gradient(#76b9ed, #76b9ed) 1px bottom / 48px 2px no-repeat, linear-gradient(#4c606a, #4c606a) 1px 0 / 48px 100% no-repeat; }
.tray { flex: 1; display: flex; align-items: center; justify-content: flex-end; font-family: "Open Sans", sans-serif; }
.cloud { margin: -2px 4px 0 0; }
.temp { display: flex; gap: 9px; font-size: 14px; width: 125px; white-space: nowrap; letter-spacing: -.25px; }
.sys { margin-left: 20px; }
.clock { width: 77px; text-align: center; font-size: 12px; line-height: 18px; letter-spacing: -.45px; }
.note { margin-left: 7px; }
.tray > i { width: 1px; height: 40px; background: #65717c; margin: 0 4px 0 19px; }
```
